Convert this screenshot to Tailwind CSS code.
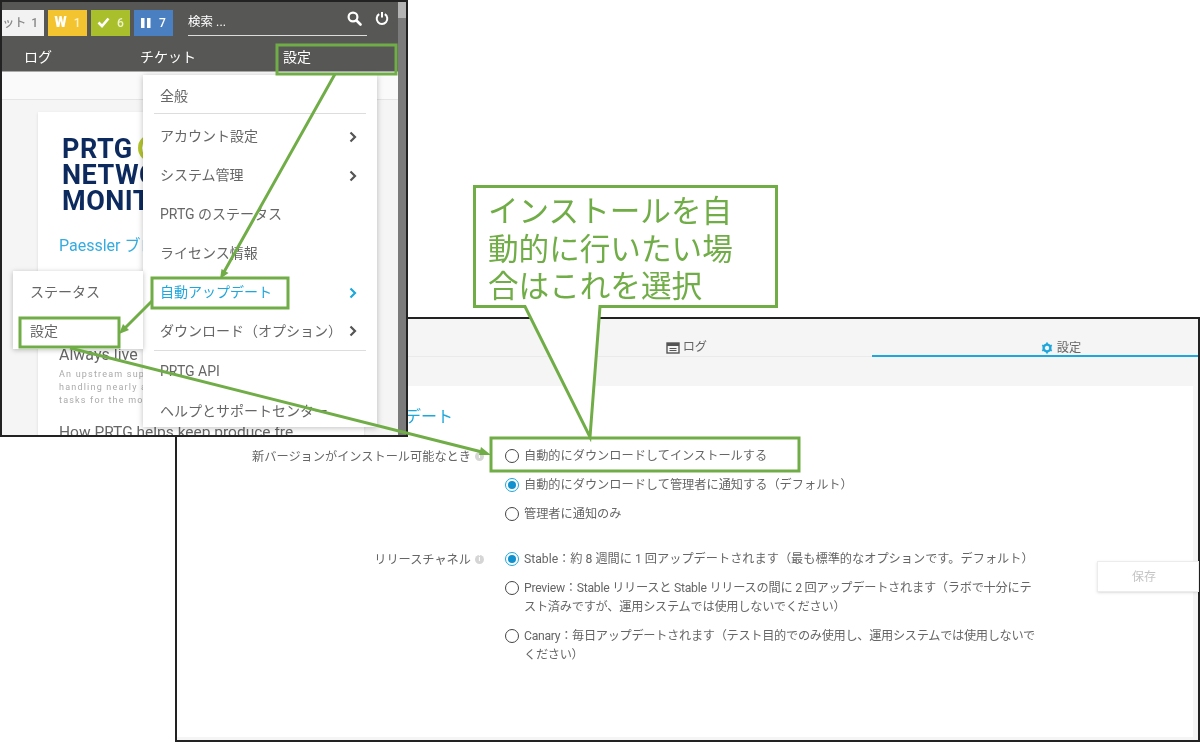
<!DOCTYPE html>
<html lang="ja">
<head>
  <meta charset="UTF-8" />
  <title>PRTG 自動アップデート設定</title>
  <meta name="viewport" content="width=device-width, initial-scale=1.0" />
  <script src="https://cdn.jsdelivr.net/npm/@tailwindcss/browser@4"></script>
</head>
<body class="bg-white">
<div class="relative w-[1200px] h-[742px] overflow-hidden bg-white blur-[0.4px] font-[Roboto,'Noto_Sans_CJK_JP',sans-serif] text-[#666]">

  <!-- Settings window (back) -->
  <section class="absolute left-[175px] top-[317px] w-[1025px] h-[425px] border-2 border-[#222] bg-[#f5f5f5] flex flex-col">
    <div class="flex h-[38px] border-b border-[#eaeaea] text-[12.2px]">
      <div class="w-[695px] flex items-center justify-end gap-[3px] pr-[165px] pt-[20px]">
        <svg width="14" height="12" viewBox="0 0 14 12" class="text-[#555]"><rect x="1" y="1" width="12" height="10" fill="none" stroke="currentColor" stroke-width="1.4"/><rect x="1" y="1" width="12" height="3" fill="currentColor"/><path d="M3.5 6.5h7M3.5 8.5h7" stroke="currentColor"/></svg>
        <span>ログ</span>
      </div>
      <div class="flex-1 flex items-center justify-center gap-[4px] pt-[22px] pl-[52px] border-b-2 border-[#1ea7dc] -mb-px">
        <svg width="12" height="12" viewBox="0 0 12 12" class="text-[#1ea7dc]"><circle cx="6" cy="6" r="3.4" fill="none" stroke="currentColor" stroke-width="2.4"/><path d="M6 .5v2.4M6 9.1v2.4M1.2 3.2l2 1.2M8.8 7.6l2 1.2M1.2 8.8l2-1.2M8.8 4.4l2-1.2" stroke="currentColor" stroke-width="1.8"/></svg>
        <span>設定</span>
      </div>
    </div>

    <div class="mt-[29px] mr-[5px] mb-[3px] flex-1 bg-white text-[12.2px] relative">
      <h2 class="pt-[21px] pl-[148px] text-[16px] leading-[20px] text-[#1ea7dc]">自動アップデート</h2>

      <div class="mt-[20px] flex">
        <div class="w-[307px] flex justify-end items-start gap-[4px] pt-[1px] leading-[18px]">
          <span>新バージョンがインストール可能なとき</span><span class="mt-[4px] w-[9px] h-[9px] rounded-full bg-[#d5d5d5] text-white text-[7px] leading-[9px] text-center font-bold">i</span>
        </div>
        <div class="ml-[21px] w-[530px] flex flex-col gap-[11px] leading-[18px]">
          <label class="flex gap-[5px]"><span class="mt-[2px] w-[14px] h-[14px] shrink-0 rounded-full border-[1.5px] border-[#444]"></span><span>自動的にダウンロードしてインストールする</span></label>
          <label class="flex gap-[5px]"><span class="mt-[2px] w-[14px] h-[14px] shrink-0 rounded-full border-[1.5px] border-[#1ea7dc] flex items-center justify-center"><span class="w-[8px] h-[8px] rounded-full bg-[#1192cf]"></span></span><span>自動的にダウンロードして管理者に通知する（デフォルト）</span></label>
          <label class="flex gap-[5px]"><span class="mt-[2px] w-[14px] h-[14px] shrink-0 rounded-full border-[1.5px] border-[#444]"></span><span>管理者に通知のみ</span></label>
        </div>
      </div>

      <div class="mt-[27px] flex">
        <div class="w-[307px] flex justify-end items-start gap-[4px] pt-[1px] leading-[18px]">
          <span>リリースチャネル</span><span class="mt-[4px] w-[9px] h-[9px] rounded-full bg-[#d5d5d5] text-white text-[7px] leading-[9px] text-center font-bold">i</span>
        </div>
        <div class="ml-[21px] w-[580px] flex flex-col gap-[10px] leading-[19px]">
          <label class="flex gap-[5px]"><span class="mt-[2px] w-[14px] h-[14px] shrink-0 rounded-full border-[1.5px] border-[#1ea7dc] flex items-center justify-center"><span class="w-[8px] h-[8px] rounded-full bg-[#1192cf]"></span></span><span>Stable：約 8 週間に 1 回アップデートされます（最も標準的なオプションです。デフォルト）</span></label>
          <label class="flex gap-[5px]"><span class="mt-[2px] w-[14px] h-[14px] shrink-0 rounded-full border-[1.5px] border-[#444]"></span><span class="tracking-[-0.25px]">Preview：Stable リリースと Stable リリースの間に 2 回アップデートされます（ラボで十分にテ<br>スト済みですが、運用システムでは使用しないでください）</span></label>
          <label class="flex gap-[5px]"><span class="mt-[2px] w-[14px] h-[14px] shrink-0 rounded-full border-[1.5px] border-[#444]"></span><span class="tracking-[-0.3px]">Canary：毎日アップデートされます（テスト目的でのみ使用し、運用システムでは使用しないで<br>ください）</span></label>
        </div>
      </div>

      <button class="absolute right-[-6px] top-[175px] w-[102px] h-[31px] pr-[8px] bg-white border border-[#ececec] shadow-sm text-[#c4c4c4] text-[12px]">保存</button>
    </div>
  </section>

  <!-- PRTG window (front) -->
  <section class="absolute left-0 top-0 w-[408px] h-[437px] border-2 border-[#222] bg-[#f5f5f5] flex overflow-hidden">
    <div class="relative w-[396px] h-full flex flex-col">
      <header class="h-[70px] bg-[#575756] border-b border-[#aaa] text-white shrink-0">
        <div class="flex items-center h-[41px] gap-[4px] text-[12px] font-medium">
          <span class="w-[42px] h-[26px] bg-[#f2f2f2] text-[#888] flex items-center justify-end gap-[5px] pr-[6px] overflow-hidden whitespace-nowrap">ット<span>1</span></span>
          <span class="w-[39px] h-[26px] bg-[#f4c430] flex items-center justify-center gap-[7px]"><b class="font-black text-[14px]">W</b><span class="text-[#fdf1c7]">1</span></span>
          <span class="w-[39px] h-[26px] bg-[#a9bf2b] flex items-center justify-center gap-[7px]"><svg width="13" height="11" viewBox="0 0 13 11"><path d="M1.500 5.500 5 9l6.500-7.500" fill="none" stroke="#fff" stroke-width="2.600"/></svg><span class="text-[#eef3cf]">6</span></span>
          <span class="w-[39px] h-[26px] bg-[#4a7fc1] flex items-center justify-center gap-[8px]"><svg width="10" height="10" viewBox="0 0 10 10"><path d="M0 0h3.500v10H0zM6 0h3.500v10H6z" fill="#fff"/></svg><span>7</span></span>
          <div class="ml-[11px] w-[179px] h-[26px] border-b border-[#ddd] flex items-center text-[12.5px] font-normal">検索 ...</div>
          <svg class="ml-[-24px] -mt-[9px]" width="15" height="15" viewBox="0 0 15 15"><circle cx="6" cy="6" r="4.400" fill="none" stroke="#fff" stroke-width="2.200"/><path d="m9.500 9.500 4 4" stroke="#fff" stroke-width="2.600" stroke-linecap="round"/></svg>
          <svg class="ml-[9px] -mt-[9px]" width="14" height="14" viewBox="0 0 14 14"><path d="M4.200 3.200a5.300 5.300 0 1 0 5.600 0" fill="none" stroke="#fff" stroke-width="2"/><path d="M7 1v5.500" stroke="#fff" stroke-width="2"/></svg>
        </div>
        <nav class="flex items-center h-[28px] text-[14px] pl-[22px]">
          <span class="w-[116px]">ログ</span><span class="w-[143px]">チケット</span><span>設定</span>
        </nav>
      </header>

      <div class="flex-1 overflow-hidden">
        <div class="h-[28px] bg-[#fafafa] border-b border-[#e5e5e5]"></div>
        <article class="relative mt-[12px] ml-[36px] w-[326px] h-[400px] bg-white pl-[24px] shadow-sm">
          <span class="absolute left-[100px] top-[22px] w-[28px] h-[28px] rounded-full border-[4px] border-[#b5c72e]"></span>
          <div class="pt-[24px] text-[#0c2a5e] font-bold text-[27px] leading-[26px] tracking-[0.5px]">
            <p>PRTG</p><p>NETWORK</p><p>MONITOR</p>
          </div>
          <p class="mt-[20px] -ml-[3px] text-[16px] leading-[24px] text-[#35ace0]">Paessler ブログ</p>
          <p class="mt-[87px] -ml-[3px] text-[16px] leading-[20px] whitespace-nowrap">Always live</p>
          <div class="-ml-[3px] mt-[3px] text-[9px] leading-[13px] text-[#aaa] tracking-[1.2px] whitespace-nowrap">
            <p>An upstream supplier</p><p>handling nearly all</p><p>tasks for the most</p>
          </div>
          <p class="mt-[15px] -ml-[3px] text-[15.500px] leading-[20px] whitespace-nowrap">How PRTG helps keep produce fre...</p>
        </article>
      </div>

      <!-- Settings menu -->
      <div class="absolute left-[141px] top-[73px] w-[234px] h-[352px] bg-white shadow-[0_1px_6px_rgba(0,0,0,0.25)] px-[11px] text-[14px] z-10">
        <div class="h-[37px] mt-[2px] flex items-center px-[6px] border-b border-[#ddd] pt-[3px]">全般</div>
        <ul class="mt-[3px]">
          <li class="h-[39px] flex items-center justify-between pl-[6px] pr-[9px]">アカウント設定<svg width="8" height="12" viewBox="0 0 8 12"><path d="m1.500 1.500 4.500 4.500-4.500 4.500" fill="none" stroke="#555" stroke-width="2.200"/></svg></li>
          <li class="h-[39px] flex items-center justify-between pl-[6px] pr-[9px]">システム管理<svg width="8" height="12" viewBox="0 0 8 12"><path d="m1.500 1.500 4.500 4.500-4.500 4.500" fill="none" stroke="#555" stroke-width="2.200"/></svg></li>
          <li class="h-[39px] flex items-center px-[6px]">PRTG のステータス</li>
          <li class="h-[39px] flex items-center px-[6px]">ライセンス情報</li>
          <li class="h-[39px] flex items-center justify-between pl-[6px] pr-[9px] text-[#1ea7dc]">自動アップデート<svg width="8" height="12" viewBox="0 0 8 12"><path d="m1.500 1.500 4.500 4.500-4.500 4.500" fill="none" stroke="#1ea7dc" stroke-width="2.200"/></svg></li>
          <li class="h-[39px] flex items-center justify-between pl-[6px] pr-[9px] border-b border-[#ddd]">ダウンロード（オプション）<svg width="8" height="12" viewBox="0 0 8 12"><path d="m1.500 1.500 4.500 4.500-4.500 4.500" fill="none" stroke="#555" stroke-width="2.200"/></svg></li>
          <li class="h-[41px] flex items-center px-[6px]">PRTG API</li>
          <li class="h-[38px] flex items-center px-[6px]">ヘルプとサポートセンター</li>
        </ul>
      </div>

      <!-- Status submenu -->
      <div class="absolute left-[11px] top-[269px] w-[130px] h-[78px] bg-white shadow-[0_1px_5px_rgba(0,0,0,0.25)] pl-[17px] pt-[2px] text-[14px] z-10">
        <p class="h-[39px] flex items-center">ステータス</p>
        <p class="h-[39px] flex items-center">設定</p>
      </div>
    </div>
    <div class="w-[8px] bg-[#7b7b7b] h-full"><div class="h-[16px] bg-[#b4b4b4]"></div></div>
  </section>

  <!-- Green annotations -->
  <svg class="absolute inset-0 z-20" width="1200" height="742" viewBox="0 0 1200 742" fill="none" stroke="#70ad47" stroke-width="3">
    <rect x="277" y="45" width="119" height="29"/>
    <rect x="152" y="278" width="136" height="30"/>
    <rect x="20" y="318" width="99" height="29"/>
    <rect x="491" y="438" width="308" height="33"/>
    <path d="M335 74 224 272M152 301 125 328M70 348 482 452"/>
    <path d="m220 279 1.500-10 7 4zM119 334l4-10 6 6zM491 455l-10-8-2 8z" fill="#70ad47" stroke="none"/>
    <path d="M474.500 186.500h302v120H600L590 437 525 306.500h-50.500z" fill="#fff"/>
  </svg>
  <p class="absolute left-[488px] top-[191px] z-30 w-[260px] text-[30.600px] leading-[37.500px] text-[#70ad47] font-['Noto_Sans_CJK_JP',sans-serif]">インストールを自<br>動的に行いたい場<br>合はこれを選択</p>
</div>
</body>
</html>
